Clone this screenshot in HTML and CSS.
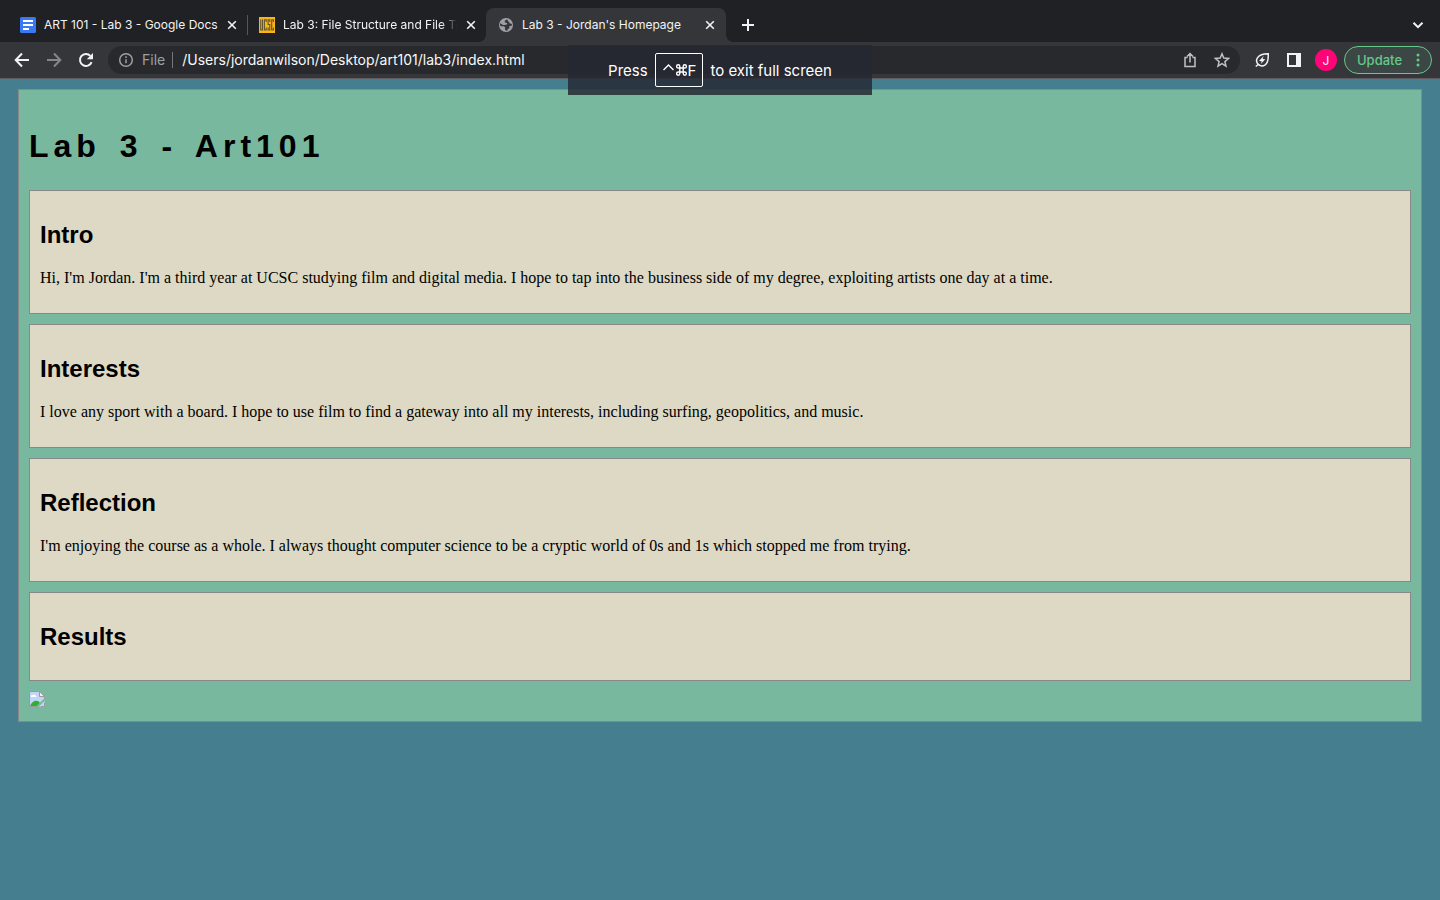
FILE: index.html
```html
<!DOCTYPE html>
<html lang="en">
<head>
<meta charset="utf-8">
<title>Lab 3 - Jordan's Homepage</title>
<link rel="stylesheet" href="styles.css">
</head>
<body>
<header class="browser">
  <div class="tab-strip">
    <div class="tab tab-divided">
      <svg class="favicon" viewBox="0 0 16 16"><rect width="16" height="16" rx="1.5" fill="#3b78f5"/><path d="M3 4h10M3 8h10M3 12h6" stroke="#fff" stroke-width="2"/></svg>
      <span class="tab-title">ART 101 - Lab 3 - Google Docs</span>
      <button class="close" aria-label="Close tab"><svg viewBox="0 0 16 16"><path d="M4.2 4.2l7.6 7.6M11.8 4.2l-7.6 7.6"/></svg></button>
    </div>
    <div class="tab">
      <svg class="favicon" viewBox="0 0 16 16"><rect width="16" height="16" fill="#fdb515"/><path d="M1.7 2.5v10.5h1.8V2.5M7.2 5V2.8H5.4v10.2h1.8V10.500M10.800 5V2.800H9.100V7.500h1.700V13H9.100v-2.500M14.400 5V2.800h-1.700V13h1.700v-2.500" fill="none" stroke="#5d5631" stroke-width="1.100"/></svg>
      <span class="tab-title tab-title-fade">Lab 3: File Structure and File Tree</span>
      <button class="close" aria-label="Close tab"><svg viewBox="0 0 16 16"><path d="M4.2 4.2l7.6 7.6M11.8 4.2l-7.6 7.6"/></svg></button>
    </div>
    <div class="tab tab-active">
      <svg class="favicon" viewBox="0 0 16 16"><circle cx="8" cy="8" r="7" fill="#9aa0a6"/><path d="M9 2.300L6.600 4 7 5.600 9 6 9.200 7.300 7 8H5L2.300 6.200 1.900 8.300 3 9.300H6L7.300 10.700 6.800 12.200 8.200 13.800 9.500 13.600 9.800 12 11.700 11 11 9.300 13.700 8.800 14 7 12 6.500 10.800 5z" fill="#35363a"/></svg>
      <span class="tab-title">Lab 3 - Jordan's Homepage</span>
      <button class="close" aria-label="Close tab"><svg viewBox="0 0 16 16"><path d="M4.2 4.2l7.6 7.6M11.8 4.2l-7.6 7.6"/></svg></button>
    </div>
    <button class="new-tab" aria-label="New tab"><svg viewBox="0 0 16 16"><path d="M8 2v12M2 8h12"/></svg></button>
    <button class="tab-search" aria-label="Search tabs"><svg viewBox="0 0 16 16"><path d="M3.500 5.700L8 10.200l4.500-4.500"/></svg></button>
  </div>
  <div class="toolbar">
    <nav class="navigation">
      <button class="icon-button" aria-label="Back"><svg viewBox="0 0 16 16"><path d="M15 8H2M8 1.500L1.700 8 8 14.500"/></svg></button>
      <button class="icon-button dim" aria-label="Forward"><svg viewBox="0 0 16 16"><path d="M1 8h13M8 1.500L14.300 8 8 14.500"/></svg></button>
      <button class="icon-button" aria-label="Reload"><svg viewBox="0 0 16 16"><path d="M13.600 10.100A6 6 0 1 1 12.400 3.900"/><path d="M15 1v6.200H8.800z" fill="currentColor" stroke="none"/></svg></button>
    </nav>
    <div class="address-bar">
      <svg class="info" viewBox="0 0 16 16"><circle cx="8" cy="8" r="6.300"/><path d="M8 7.300v4M8 4.300v1.600"/></svg>
      <label class="scheme" for="address">File</label>
      <input class="address" id="address" type="text" value="/Users/jordanwilson/Desktop/art101/lab3/index.html">
      <button class="icon-button soft" aria-label="Share"><svg viewBox="0 0 16 16"><path d="M5.500 5.500H3v9h10v-9h-2.500M8 10.500V2M5 4.500l3-3 3 3"/></svg></button>
      <button class="icon-button soft" aria-label="Bookmark"><svg viewBox="0 0 16 16"><path d="M8 1.800l1.800 4.300 4.700.4-3.600 3.100 1.100 4.600L8 11.700l-4 2.500 1.100-4.600L1.500 6.500l4.700-.4z"/></svg></button>
    </div>
    <div class="actions">
      <button class="icon-button" aria-label="Energy saver"><svg class="leaf" viewBox="0 0 16 16"><path d="M14.200 1.800c.3 5.500-.4 9.200-3 11-2.300 1.500-5.100 1.200-6.900-.4-1.800-1.800-2.200-4.600-.7-6.800 1.800-2.800 5.500-3.700 10.600-3.800zM4.400 12.200l-2.600 2.300"/><path d="M9.600 4L5 8.900l2.700.3L6.800 12l4.500-4.700-2.600-.4z" fill="currentColor" stroke="none"/></svg></button>
      <button class="icon-button" aria-label="Side panel"><svg viewBox="0 0 16 16"><path d="M1 1h14v14H1zM3 3v10h7V3z" fill="currentColor" fill-rule="evenodd" stroke="none"/></svg></button>
      <button class="avatar" aria-label="Profile">J</button>
      <button class="update">Update<svg viewBox="0 0 4 14"><circle cx="2" cy="2" r="1.500"/><circle cx="2" cy="7" r="1.500"/><circle cx="2" cy="12" r="1.500"/></svg></button>
    </div>
  </div>
  <div class="fullscreen-hint">Press <kbd class="key"><svg viewBox="0 0 12 14"><path d="M1 7l5-5 5 5"/></svg><svg viewBox="0 0 12 14"><path d="M4 5H2.700A1.600 1.600 0 1 1 4.300 3.400v7.200A1.600 1.600 0 1 1 2.700 9h6.600a1.600 1.600 0 1 1-1.600 1.600V3.400A1.600 1.600 0 1 1 9.300 5H4"/></svg>F</kbd> to exit full screen</div>
</header>
<main class="page">
  <h1 class="page-title">Lab 3 - Art101</h1>
  <section class="card">
    <h2 class="card-title">Intro</h2>
    <p class="card-text">Hi, I'm Jordan. I'm a third year at UCSC studying film and digital media. I hope to tap into the business side of my degree, exploiting artists one day at a time.</p>
  </section>
  <section class="card">
    <h2 class="card-title">Interests</h2>
    <p class="card-text">I love any sport with a board. I hope to use film to find a gateway into all my interests, including surfing, geopolitics, and music.</p>
  </section>
  <section class="card">
    <h2 class="card-title">Reflection</h2>
    <p class="card-text">I'm enjoying the course as a whole. I always thought computer science to be a cryptic world of 0s and 1s which stopped me from trying.</p>
  </section>
  <section class="card">
    <h2 class="card-title">Results</h2>
  </section>
  <svg class="missing-image" viewBox="0 0 16 16"><path d="M.5.500h10l5 5v10H.500z" fill="#c3d5f7"/><path d="M2 5.500c0-1.400 1.500-1.800 2-1 .6-1.500 2.500-1 2.500.3 1 0 1.200.7 1 1.200H2z" fill="#fff"/><path d="M1 15c1.500-3.500 4-5.500 6.500-5.200 2 .2 3 1 3.500 2.200L8.500 15z" fill="#2fb02f"/><path d="M15.500 8.500l-7 7" stroke="#78b89e" stroke-width="2"/><path d="M.5 15.500V.500h10l5 5V8M.5 15.500H9M12 15.500h3.500V12" fill="none" stroke="#9b9b9b"/><path d="M10.500.500v5h5z" fill="#eee" stroke="#9b9b9b"/></svg>
</main>
</body>
</html>
```

FILE: styles.css
```css
* { box-sizing: border-box; }

body {
  margin: 0;
  background: #457f8f;
  color: #000;
  font-family: "Liberation Serif", serif;
  font-size: 16px;
}

button {
  display: flex;
  align-items: center;
  justify-content: center;
  margin: 0;
  padding: 0;
  border: 0;
  background: none;
  color: inherit;
  font: inherit;
}

button svg {
  width: 16px;
  height: 16px;
  fill: none;
  stroke: currentColor;
  stroke-width: 2;
}

/* Browser frame */
.browser {
  position: relative;
  background: #35363a;
  border-bottom: 1px solid #5d5d61;
  color: #f1f3f4;
  font-family: Inter, sans-serif;
  font-size: 12px;
}

.tab-strip {
  display: flex;
  height: 42px;
  padding: 8px 14px 0 8px;
  background: #202124;
}

.tab {
  position: relative;
  display: flex;
  align-items: center;
  flex: 0 1 239px;
  min-width: 0;
  padding: 0 7px 0 12px;
}

.tab-divided::after {
  content: "";
  position: absolute;
  right: -1px;
  top: 7px;
  width: 1px;
  height: 20px;
  background: #54565a;
}

.tab-active {
  flex-basis: 240px;
  padding-right: 8px;
  border-radius: 8px 8px 0 0;
  background: #35363a;
}

.tab-active::before,
.tab-active::after {
  content: "";
  position: absolute;
  bottom: 0;
  width: 8px;
  height: 8px;
}

.tab-active::before {
  right: 100%;
  background: radial-gradient(circle at 0 0, #202124 8px, #35363a 8px);
}

.tab-active::after {
  left: 100%;
  background: radial-gradient(circle at 100% 0, #202124 8px, #35363a 8px);
}

.favicon {
  flex: none;
  width: 16px;
  height: 16px;
  margin-right: 8px;
}

.tab-title {
  flex: 1;
  min-width: 0;
  overflow: hidden;
  white-space: nowrap;
  line-height: 18px;
}

.tab-title-fade {
  mask-image: linear-gradient(to right, #000 calc(100% - 16px), transparent);
}

.close { flex: none; width: 16px; height: 16px; margin-left: 6px; }
.close svg { stroke-width: 1.6; }
.new-tab { width: 28px; margin-left: 8px; }
.tab-search { width: 16px; margin-left: auto; }

.toolbar {
  display: flex;
  align-items: center;
  height: 36px;
  padding: 0 8px 0 14px;
}

.navigation { display: flex; gap: 16px; margin-right: 14px; }
.icon-button { width: 16px; height: 16px; flex: none; }
.dim { color: #85868a; }
.soft { color: #bdc1c6; }
.soft svg, .leaf { stroke-width: 1.5; }

.address-bar {
  display: flex;
  align-items: center;
  flex: 1;
  min-width: 0;
  height: 28px;
  padding: 0 10px;
  border-radius: 14px;
  background: #28292c;
  font-size: 14px;
}

.address-bar .soft + .soft { margin-left: 16px; }

.info {
  width: 16px;
  height: 16px;
  margin-right: 8px;
  fill: none;
  stroke: #9aa0a6;
  stroke-width: 1.5;
}

.scheme {
  padding-right: 7px;
  border-right: 1px solid #74777b;
  color: #9aa0a6;
  line-height: 16px;
}

.address {
  flex: 1;
  min-width: 0;
  padding: 0 0 1px 9px;
  border: 0;
  outline: 0;
  background: none;
  color: #f8f9fa;
  font: inherit;
}

.actions { display: flex; align-items: center; gap: 16px; margin-left: 14px; }

.avatar {
  width: 22px;
  height: 22px;
  margin: 0 -9px 0 -3px;
  border-radius: 50%;
  background: #ff0476;
}

.update {
  justify-content: space-between;
  width: 88px;
  height: 28px;
  padding: 0 11px 0 12px;
  border: 1px solid #64c98b;
  border-radius: 14px;
  background: #3c4644;
  color: #64c98b;
  font-size: 13px;
  font-weight: 500;
}

.update svg { width: 4px; height: 14px; fill: currentColor; stroke: none; }

.fullscreen-hint {
  position: absolute;
  top: 45px;
  left: calc(50% - 152px);
  display: flex;
  align-items: center;
  justify-content: center;
  gap: 7px;
  width: 304px;
  height: 50px;
  background: rgba(37, 41, 50, 0.84);
  color: #fff;
  font-size: 15px;
}

.key {
  display: flex;
  align-items: center;
  height: 34px;
  padding: 0 6px;
  border: 1px solid #fff;
  border-radius: 2px;
  font: inherit;
}

.key svg { width: 13px; height: 14px; fill: none; stroke: currentColor; stroke-width: 1.4; }

/* Homepage */
.page {
  margin: 10px 18px;
  padding: 10px 10px 14px;
  border: 1px solid #888;
  background: #78b89e;
}

.page-title {
  margin: 0;
  padding: 28px 0 25px;
  font-family: "Liberation Sans", sans-serif;
  font-size: 32px;
  line-height: 37px;
  letter-spacing: 5px;
  word-spacing: 5px;
}

.card {
  margin-bottom: 10px;
  padding: 30px 10px;
  border: 1px solid #888;
  background: #ded9c4;
}

.card:has(.card-text) { padding-bottom: 26px; }

.card-title {
  margin: 0;
  font-family: "Liberation Sans", sans-serif;
  font-size: 24px;
  line-height: 27px;
}

.card-text { margin: 20px 0 0; line-height: 19px; }
.missing-image { display: block; width: 16px; height: 16px; }
```
